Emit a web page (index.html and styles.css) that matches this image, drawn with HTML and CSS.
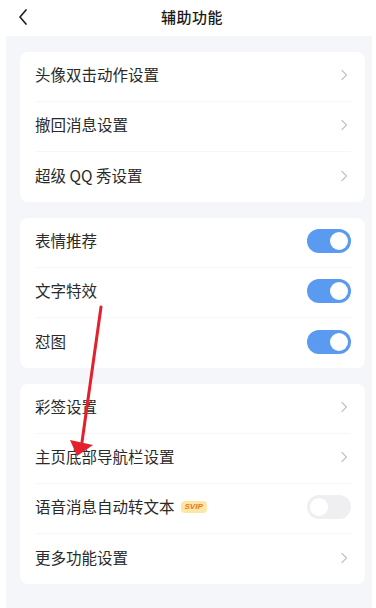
FILE: index.html
```html
<!DOCTYPE html>
<html lang="zh">
<head>
<meta charset="utf-8">
<link rel="stylesheet" href="styles.css">
</head>
<body>
<header class="header">
  <svg class="back" width="12" height="18" viewBox="0 0 12 18"><path d="M9 2 L3 9 L9 16" fill="none" stroke="#222" stroke-width="1.7" stroke-linecap="round" stroke-linejoin="round"/></svg>
  <h1 class="title">辅助功能</h1>
</header>
<main class="content">
  <section class="card">
    <div class="row"><span class="label">头像双击动作设置</span><svg class="chev" width="8" height="12" viewBox="0 0 8 12"><path d="M2 1.5 L6.5 6 L2 10.5" fill="none" stroke="#c4c6cb" stroke-width="1.3" stroke-linecap="round" stroke-linejoin="round"/></svg></div>
    <div class="row"><span class="label">撤回消息设置</span><svg class="chev" width="8" height="12" viewBox="0 0 8 12"><path d="M2 1.5 L6.5 6 L2 10.5" fill="none" stroke="#c4c6cb" stroke-width="1.3" stroke-linecap="round" stroke-linejoin="round"/></svg></div>
    <div class="row last"><span class="label">超级 QQ 秀设置</span><svg class="chev" width="8" height="12" viewBox="0 0 8 12"><path d="M2 1.5 L6.5 6 L2 10.5" fill="none" stroke="#c4c6cb" stroke-width="1.3" stroke-linecap="round" stroke-linejoin="round"/></svg></div>
  </section>
  <section class="card">
    <div class="row"><span class="label">表情推荐</span><span class="toggle on"><span class="knob"></span></span></div>
    <div class="row"><span class="label">文字特效</span><span class="toggle on"><span class="knob"></span></span></div>
    <div class="row last"><span class="label">怼图</span><span class="toggle on"><span class="knob"></span></span></div>
  </section>
  <section class="card">
    <div class="row"><span class="label">彩签设置</span><svg class="chev" width="8" height="12" viewBox="0 0 8 12"><path d="M2 1.5 L6.5 6 L2 10.5" fill="none" stroke="#c4c6cb" stroke-width="1.3" stroke-linecap="round" stroke-linejoin="round"/></svg></div>
    <div class="row"><span class="label">主页底部导航栏设置</span><svg class="chev" width="8" height="12" viewBox="0 0 8 12"><path d="M2 1.5 L6.5 6 L2 10.5" fill="none" stroke="#c4c6cb" stroke-width="1.3" stroke-linecap="round" stroke-linejoin="round"/></svg></div>
    <div class="row"><span class="label">语音消息自动转文本<span class="svip">SVIP</span></span><span class="toggle off"><span class="knob"></span></span></div>
    <div class="row last"><span class="label">更多功能设置</span><svg class="chev" width="8" height="12" viewBox="0 0 8 12"><path d="M2 1.5 L6.5 6 L2 10.5" fill="none" stroke="#c4c6cb" stroke-width="1.3" stroke-linecap="round" stroke-linejoin="round"/></svg></div>
  </section>
</main>
<svg class="arrow" width="376" height="608" viewBox="0 0 376 608">
  <line x1="101" y1="307" x2="82" y2="442" stroke="#e3202b" stroke-width="3" stroke-linecap="round"/>
  <polygon points="70,440 93,445 77,456" fill="#e3202b"/>
</svg>
</body>
</html>
```
FILE: styles.css
```css
* { box-sizing: border-box; }
html, body { margin: 0; padding: 0; }
body {
  width: 376px;
  height: 608px;
  background: #ffffff;
  font-family: "Noto Sans CJK SC", "Noto Sans", sans-serif;
  color: #222;
  overflow: hidden;
  position: relative;
}
.header {
  height: 36px;
  display: flex;
  align-items: center;
  justify-content: center;
  position: relative;
}
.back {
  position: absolute;
  left: 17px;
  top: 8px;
}
.title {
  margin: -3px 0 0 8px;
  font-size: 15px;
  font-weight: 500;
  color: #1a1a1a;
  letter-spacing: 0.5px;
  line-height: 1;
}
.content {
  margin: 0 4px 0 6px;
  height: 572px;
  background: #f5f6fa;
  padding: 16px 7px 0 14px;
  display: flex;
  flex-direction: column;
  gap: 16px;
}
.card {
  background: #fff;
  border-radius: 8px;
}
.row {
  height: 50px;
  margin: 0 14px 0 15px;
  display: flex;
  align-items: center;
  justify-content: space-between;
  border-bottom: 1px solid #f7f7f9;
}
.row.last { border-bottom: none; }
.label {
  font-size: 15.5px;
  color: #2a2a2a;
  display: flex;
  align-items: center;
  line-height: 1;
  margin-top: -3px;
}
.chev { margin-right: 3px; margin-top: -3px; }
.toggle {
  width: 44px;
  height: 24px;
  border-radius: 12px;
  display: flex;
  align-items: center;
  padding: 0 3px;
  margin-top: -3px;
}
.toggle.on { background: #5a9af1; justify-content: flex-end; }
.toggle.off { background: #efeff1; justify-content: flex-start; }
.knob {
  width: 18px;
  height: 18px;
  border-radius: 50%;
  background: #fff;
}
.svip {
  margin-left: 6px;
  font-family: "Liberation Sans", sans-serif;
  font-size: 8px;
  font-weight: 700;
  font-style: italic;
  color: #e8742a;
  background: #fde7a4;
  border-radius: 4px;
  padding: 2px 4px;
  line-height: 1;
}
.arrow {
  position: absolute;
  left: 0;
  top: 0;
  pointer-events: none;
}
```
